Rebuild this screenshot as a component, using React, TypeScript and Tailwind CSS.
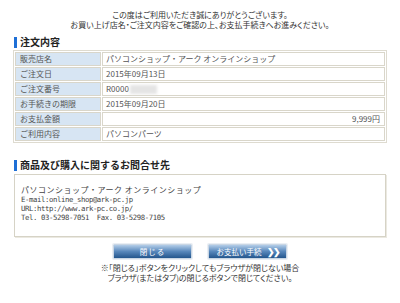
const jp = "font-['Noto_Sans_CJK_JP','Noto_Sans',sans-serif]"

const rows: { label: string; value: React.ReactNode; right?: boolean }[] = [
  { label: '販売店名', value: 'パソコンショップ・アーク オンラインショップ' },
  { label: 'ご注文日', value: '2015年09月13日' },
  {
    label: 'ご注文番号',
    value: (
      <span className="flex items-center">
        R0000
        <span className="ml-[1px] inline-block h-[9px] w-[27px] bg-[#e4e4e4] blur-[1.5px]" />
      </span>
    ),
  },
  { label: 'お手続きの期限', value: '2015年09月20日' },
  { label: 'お支払金額', value: '9,999円', right: true },
  { label: 'ご利用内容', value: 'パソコンパーツ' },
]

function Heading({ children }: { children: React.ReactNode }) {
  return (
    <div className="mx-auto flex w-[374px] items-center gap-[3px] pl-[1px]">
      <span className="h-[11px] w-[3px] bg-[#1e6fd6]" />
      <span className="text-[10px] font-bold leading-[12px] text-[#222]">{children}</span>
    </div>
  )
}

function BlueButton({ children }: { children: React.ReactNode }) {
  return (
    <button className="flex h-[15px] w-[79px] items-center justify-center gap-[5px] rounded-[1px] border border-[#c9d6e4] bg-gradient-to-b from-[#b3cde8] via-[#5787bb] to-[#23568d] text-[7.5px] leading-none tracking-[1px] text-white shadow-[0_0_0_1px_#e9eef4]">
      {children}
    </button>
  )
}

export default function App() {
  return (
    <div className={`h-[303px] w-[400px] overflow-hidden bg-white ${jp} text-[#444]`}>
      <div className="pt-[10px] text-center text-[8px] leading-[10px] text-[#333] [font-feature-settings:'palt']">
        <p>この度はご利用いただき誠にありがとうございます。</p>
        <p>お買い上げ店名・ご注文内容をご確認の上、お支払手続きへお進みください。</p>
      </div>

      <div className="mt-[6px]">
        <Heading>注文内容</Heading>
      </div>

      <table className="mx-auto mt-[2px] w-[374px] border-separate border-spacing-[1px] border border-[#dedbd0] text-[8px] leading-none">
        <tbody>
          {rows.map((r) => (
            <tr key={r.label}>
              <td className="h-[14px] w-[86px] border border-[#d9d6ca] bg-[#d7e5f3] pl-[4px] text-[#555]">{r.label}</td>
              <td
                className={`border border-[#d9d6ca] bg-white pl-[3px] pr-[4px] text-[#555] ${r.right ? 'text-right' : ''}`}
              >
                {r.value}
              </td>
            </tr>
          ))}
        </tbody>
      </table>

      <div className="mt-[16px]">
        <Heading>商品及び購入に関するお問合せ先</Heading>
      </div>

      <div className="mx-auto mt-[3px] h-[63px] w-[372px] border border-[#d6d3c6] bg-white px-[6px] pt-[10px] text-[#444] shadow-[1px_1px_0_#ebe9e1]">
        <p className="text-[8px] leading-[10px] tracking-[0.5px]">パソコンショップ・アーク オンラインショップ</p>
        <div className="font-['DejaVu_Sans_Mono',monospace] text-[7.3px] leading-[9px] tracking-[-0.4px]">
          <p>E-mail:online_shop@ark-pc.jp</p>
          <p>URL:http://www.ark-pc.co.jp/</p>
          <p>Tel. 03-5298-7051&nbsp;&nbsp;Fax. 03-5298-7105</p>
        </div>
      </div>

      <div className="mt-[7px] flex justify-center gap-[16px]">
        <BlueButton>閉じる</BlueButton>
        <BlueButton>
          <span className="tracking-normal">お支払い手続</span>
          <span className="text-[9px] font-bold tracking-[-2px]">❯❯</span>
        </BlueButton>
      </div>

      <div className="mt-[4px] text-center text-[8px] leading-[10px] text-[#333] [font-feature-settings:'palt']">
        <p>※「閉じる」ボタンをクリックしてもブラウザが閉じない場合</p>
        <p>ブラウザ(またはタブ)の閉じるボタンで閉じてください。</p>
      </div>
    </div>
  )
}
